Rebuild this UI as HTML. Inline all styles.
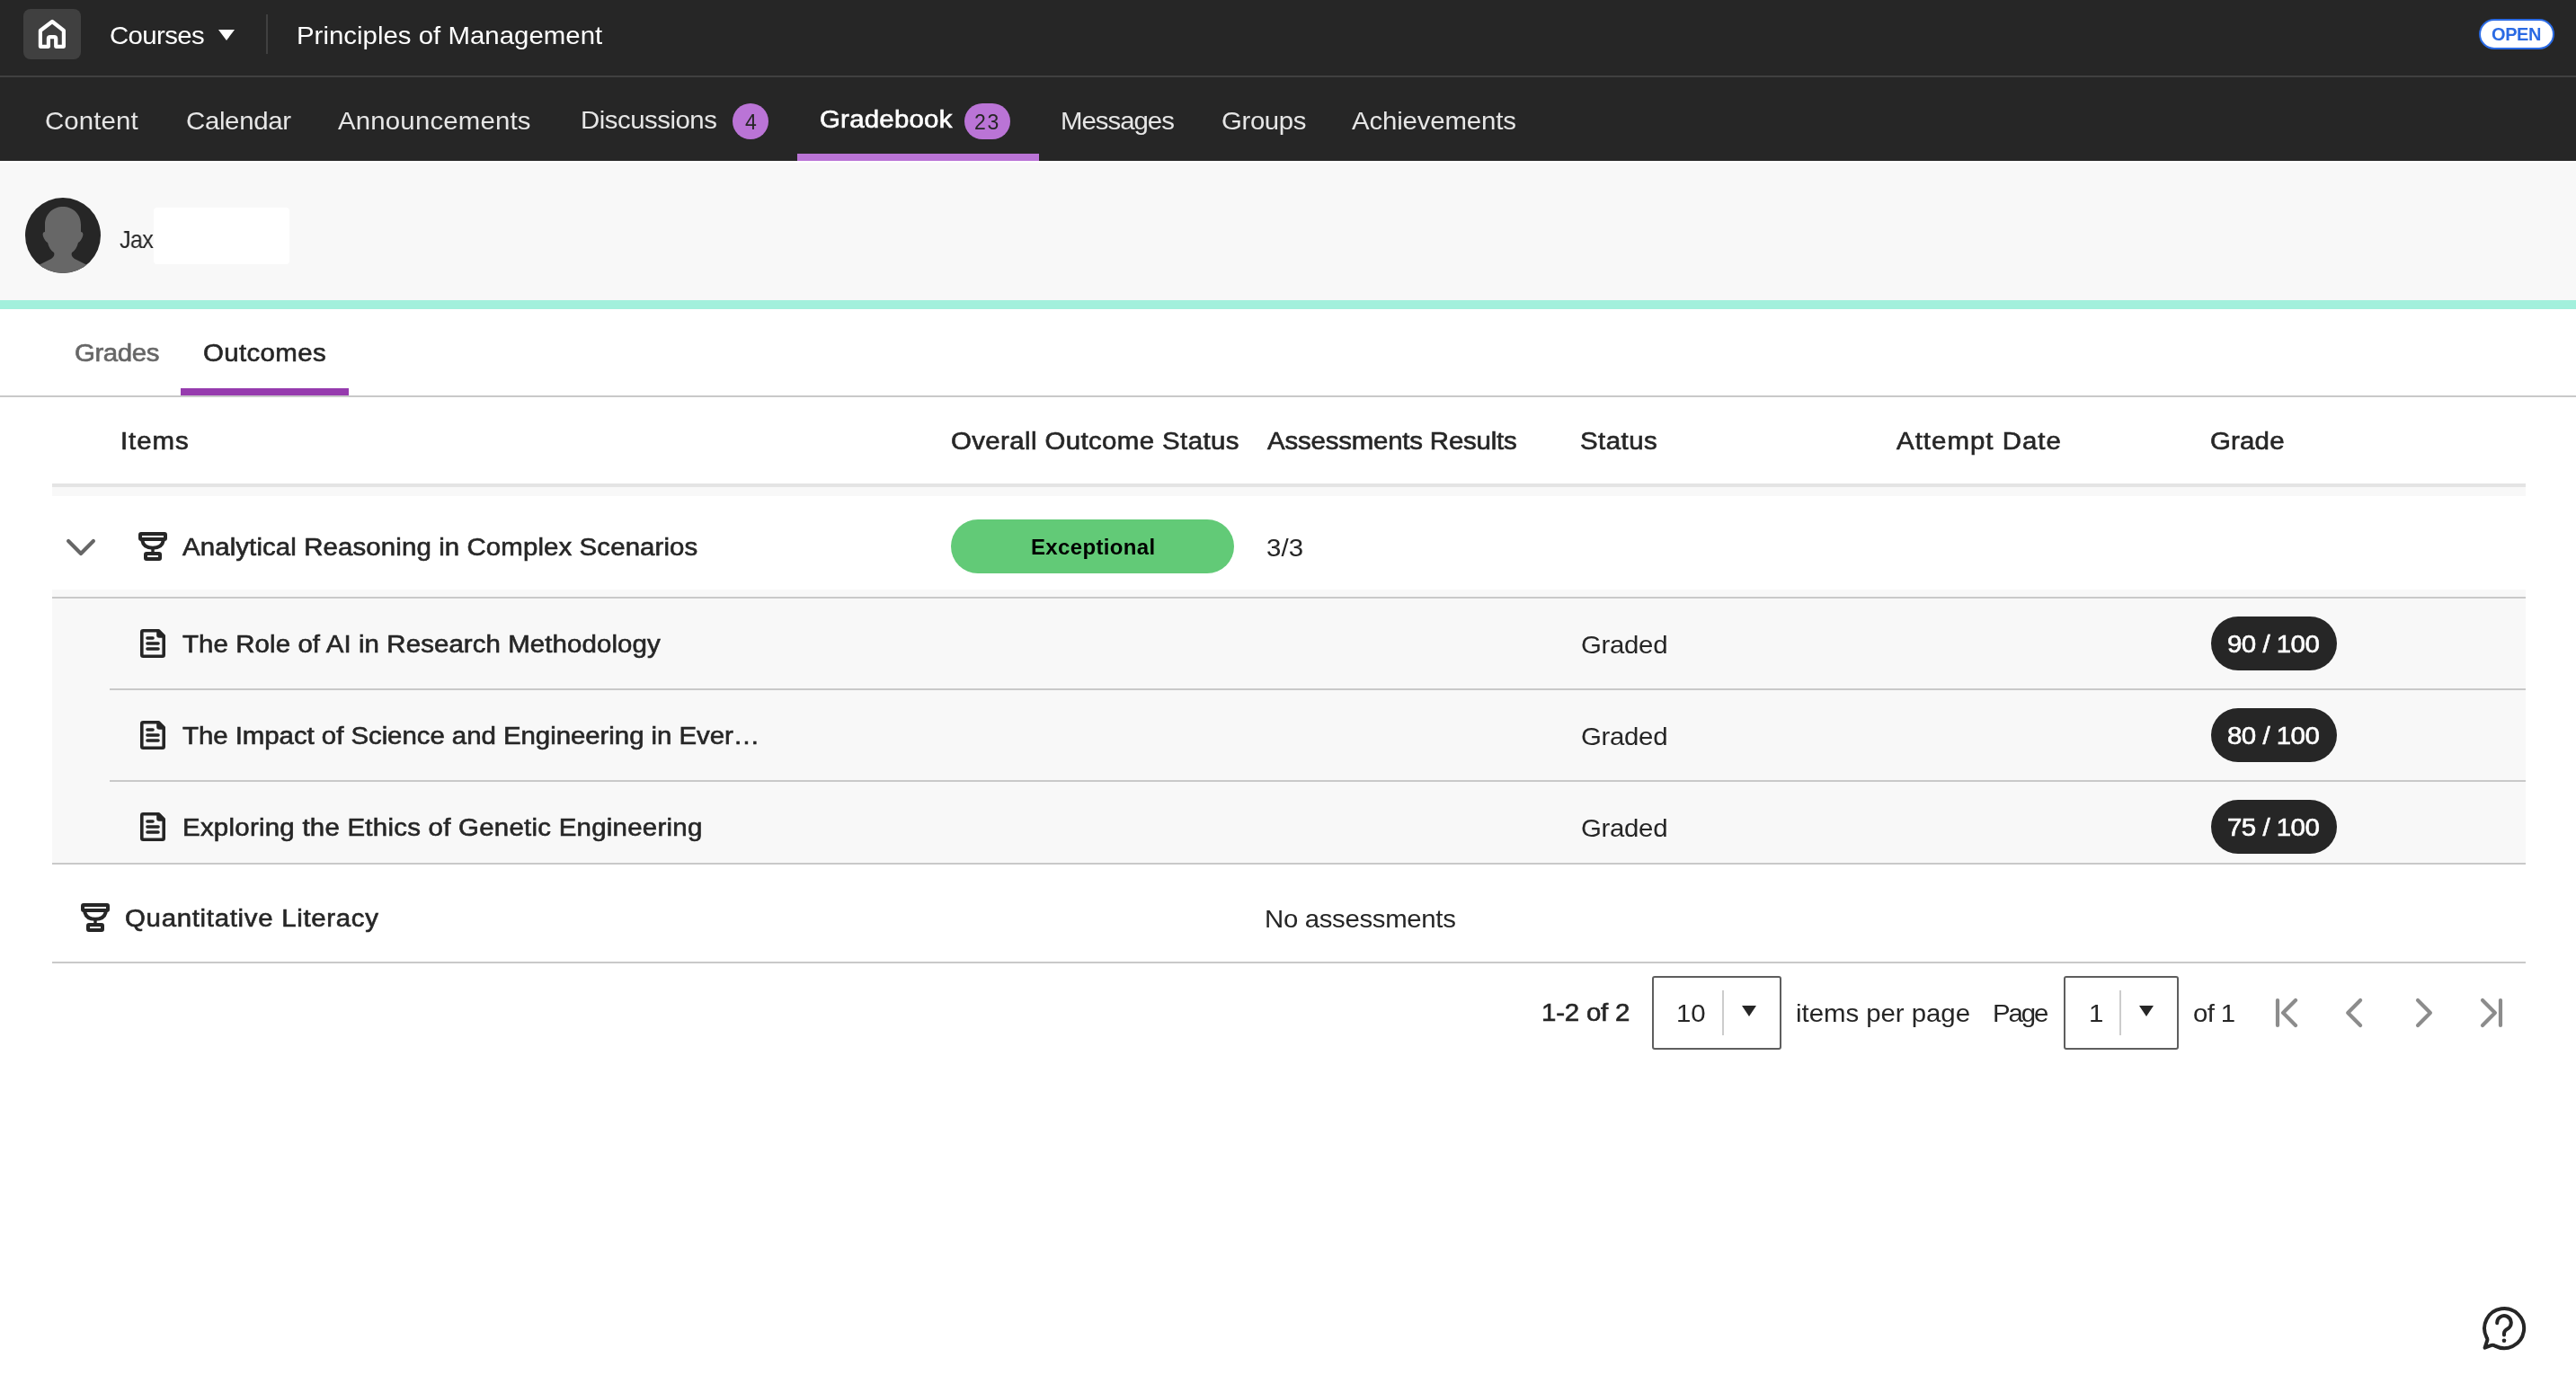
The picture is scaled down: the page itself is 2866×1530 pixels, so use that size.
<!DOCTYPE html>
<html lang="en"><head><meta charset="utf-8"><title>Gradebook - Principles of Management</title>
<style>
html,body{margin:0;padding:0;}
body{width:2866px;height:1530px;position:relative;overflow:hidden;background:#fff;font-family:"Liberation Sans",sans-serif;}
div,span,svg{position:absolute;box-sizing:border-box;}
header,nav,main,section,footer{display:block;position:static;margin:0;padding:0;height:0;}
.t{white-space:nowrap;font-weight:400;will-change:transform;transform-origin:0 0;}
.b{font-weight:700;}
.sb{-webkit-text-stroke:0.6px currentColor;}
.ic{overflow:visible;}
#top{left:0;top:0;width:2866px;height:179px;background:#262626;}
#topline{left:0;top:84px;width:2866px;height:2px;background:#404040;}
#home{left:26px;top:10px;width:64px;height:56px;border-radius:8px;background:#404040;}
#caret{left:243px;top:33px;width:0;height:0;border-left:9px solid transparent;border-right:9px solid transparent;border-top:12px solid #fff;}
#vdiv{left:296px;top:16px;width:2px;height:44px;background:#404040;}
#open{left:2758px;top:21px;width:84px;height:34px;border:2px solid #2a6ae3;border-radius:17px;background:#fff;}
.badge{background:#ba74d6;border-radius:20px;height:40px;top:115px;}
#nav-ul{left:887px;top:171px;width:269px;height:8px;background:#ba74d6;}
#hdr{left:0;top:179px;width:2866px;height:155px;background:#f8f8f8;border-top:2px solid #fff;}
#avatar{left:28px;top:220px;width:84px;height:84px;border-radius:50%;background:#262626;overflow:hidden;}
#redact{left:171px;top:231px;width:151px;height:63px;border-radius:4px;background:#fff;}
#teal{left:0;top:334px;width:2866px;height:10px;background:#a2f0dc;}
#tab-ul{left:201px;top:432px;width:187px;height:8px;background:#963bae;}
#tab-line{left:0;top:440px;width:2866px;height:2px;background:#c9c9c9;}
#th-line{left:58px;top:538px;width:2752px;height:4px;background:#e4e4e4;}
#th-gap{left:58px;top:542px;width:2752px;height:10px;background:#f8f8f8;}
#exc{left:1058px;top:578px;width:315px;height:60px;border-radius:30px;background:#62ca77;}
#kids{left:58px;top:656px;width:2752px;height:304px;background:#f8f8f8;}
.ln{height:2px;background:#c9c9c9;}
.gp{left:2460px;width:140px;height:60px;border-radius:30px;background:#262626;}
.sel{top:1086px;height:82px;border:2px solid #5e5e5e;border-radius:3px;background:#fff;}
.sdiv{top:1102px;width:2px;height:50px;background:#cccccc;}
.sarr{top:1119px;width:0;height:0;border-left:8px solid transparent;border-right:8px solid transparent;border-top:12px solid #262626;}
</style></head><body>
<div id="top"></div><div id="topline"></div>
<header aria-label="Global navigation">
<div id="home"><svg style="left:0;top:0" width="64" height="56" viewBox="26 10 64 56" fill="none" stroke="#fff" stroke-width="4.200" stroke-linejoin="round"><path d="M53.900 51.800H44.900V34L58.100 24L70.900 34V51.800H62.200V43.100Q62.200 41.100 60.200 41.100H55.900Q53.900 41.100 53.900 43.100Z"/></svg></div>
<span id="t_courses" class="t" style="left:122.05px;top:26px;font-size:28px;line-height:28px;color:#ffffff;letter-spacing:-0.615px;transform:scaleX(1.05);">Courses</span><div id="caret"></div><div id="vdiv"></div><span id="t_title" class="t" style="left:329.50px;top:26px;font-size:28px;line-height:28px;color:#ffffff;letter-spacing:0.011px;transform:scaleX(1.05);">Principles of Management</span>
<div id="open"></div><span id="t_open" class="t b" style="left:2771.84px;top:28px;font-size:20px;line-height:20px;color:#2a6ae3;letter-spacing:-0.392px;">OPEN</span>
</header>
<nav aria-label="Course navigation">
<span id="n_content" class="t" style="left:50.15px;top:121px;font-size:28px;line-height:28px;color:#e6e6e6;letter-spacing:0.103px;transform:scaleX(1.05);">Content</span><span id="n_calendar" class="t" style="left:206.55px;top:121px;font-size:28px;line-height:28px;color:#e6e6e6;letter-spacing:-0.315px;transform:scaleX(1.05);">Calendar</span><span id="n_ann" class="t" style="left:375.90px;top:121px;font-size:28px;line-height:28px;color:#e6e6e6;letter-spacing:0.165px;transform:scaleX(1.05);">Announcements</span><span id="n_disc" class="t" style="left:646.10px;top:120px;font-size:28px;line-height:28px;color:#e6e6e6;letter-spacing:-0.472px;transform:scaleX(1.05);">Discussions</span>
<div class="badge" style="left:815px;width:40px"></div><span id="b_4" class="t" style="left:828.70px;top:125px;font-size:23px;line-height:23px;color:#262626;letter-spacing:0.000px;">4</span>
<span id="n_grade" class="t sb" style="left:911.84px;top:120px;font-size:27px;line-height:27px;color:#ffffff;letter-spacing:0.204px;transform:scaleX(1.09);">Gradebook</span><div class="badge" style="left:1073px;width:51px"></div><span id="b_23" class="t" style="left:1084.20px;top:125px;font-size:23px;line-height:23px;color:#262626;letter-spacing:1.808px;">23</span>
<div id="nav-ul"></div>
<span id="n_msg" class="t" style="left:1179.90px;top:121px;font-size:28px;line-height:28px;color:#e6e6e6;letter-spacing:-0.967px;transform:scaleX(1.05);">Messages</span><span id="n_groups" class="t" style="left:1359.05px;top:121px;font-size:28px;line-height:28px;color:#e6e6e6;letter-spacing:-0.368px;transform:scaleX(1.05);">Groups</span><span id="n_ach" class="t" style="left:1504.20px;top:121px;font-size:28px;line-height:28px;color:#e6e6e6;letter-spacing:-0.156px;transform:scaleX(1.05);">Achievements</span>
</nav>
<div id="hdr"></div>
<section aria-label="Student">
<div id="avatar"><svg style="left:0;top:0" width="84" height="84" viewBox="0 0 84 84"><path fill="#676767" d="M42 10c-11 0-20 8-20 20v8c-2 0-3 2-2 5s3 6 5 7c1 5 4 9 7 11 1 3 0 5-3 7l-16 8c6 5 16 9 29 9s23-4 29-9l-16-8c-3-2-4-4-3-7 3-2 6-6 7-11 2-1 4-4 5-7s0-5-2-5v-8c0-12-9-20-20-20z"/></svg></div>
<span id="h_jax" class="t" style="left:132.70px;top:253px;font-size:28px;line-height:28px;color:#262626;letter-spacing:-0.731px;transform:scaleX(0.9);">Jax</span><div id="redact"></div>
</section>
<div id="teal"></div>
<main>
<section role="tablist" aria-label="Gradebook views">
<span id="tab_grades" class="t sb" style="left:82.64px;top:380px;font-size:27px;line-height:27px;color:#666666;letter-spacing:-0.383px;transform:scaleX(1.09);">Grades</span><span id="tab_out" class="t sb" style="left:226.04px;top:380px;font-size:27px;line-height:27px;color:#262626;letter-spacing:0.336px;transform:scaleX(1.09);">Outcomes</span><div id="tab-ul"></div><div id="tab-line"></div>
</section>
<section role="table" aria-label="Outcomes">
<span id="th_items" class="t sb" style="left:133.55px;top:478px;font-size:27px;line-height:27px;color:#262626;letter-spacing:0.853px;transform:scaleX(1.09);">Items</span><span id="th_overall" class="t sb" style="left:1057.80px;top:478px;font-size:27px;line-height:27px;color:#262626;letter-spacing:0.350px;transform:scaleX(1.09);">Overall Outcome Status</span><span id="th_assess" class="t sb" style="left:1409.73px;top:478px;font-size:27px;line-height:27px;color:#262626;letter-spacing:-0.179px;transform:scaleX(1.09);">Assessments Results</span><span id="th_status" class="t sb" style="left:1757.80px;top:478px;font-size:27px;line-height:27px;color:#262626;letter-spacing:0.431px;transform:scaleX(1.09);">Status</span><span id="th_attempt" class="t sb" style="left:2109.63px;top:478px;font-size:27px;line-height:27px;color:#262626;letter-spacing:0.926px;transform:scaleX(1.09);">Attempt Date</span><span id="th_grade" class="t sb" style="left:2459.04px;top:478px;font-size:27px;line-height:27px;color:#262626;letter-spacing:0.172px;transform:scaleX(1.09);">Grade</span>
<div id="th-line"></div><div id="th-gap"></div>
<svg class="ic" style="left:72px;top:596px" width="36" height="26" viewBox="72 596 36 26" fill="none" stroke="#666" stroke-width="4.200" stroke-linecap="round" stroke-linejoin="round"><path d="M76.100 602L90 616L103.900 602"/></svg>
<svg class="ic" style="left:154px;top:592px" width="32" height="32" viewBox="0 0 32 32" fill="none" stroke="#262626" stroke-width="4" stroke-linejoin="round" stroke-linecap="round"><rect x="2" y="2" width="28" height="6" rx="1"/><path d="M4.300 9.500C5.200 15.200 10 17.700 16 17.700S26.800 15.200 27.700 9.500"/><path d="M16 19V23" stroke-width="3.400" stroke-linecap="butt"/><rect x="8" y="24" width="16" height="6" rx="1"/></svg>
<span id="r1_title" class="t sb" style="left:202.53px;top:596px;font-size:27px;line-height:27px;color:#262626;letter-spacing:0.092px;transform:scaleX(1.09);">Analytical Reasoning in Complex Scenarios</span><div id="exc"></div><span id="r1_exc" class="t b" style="left:1147.10px;top:597px;font-size:24px;line-height:24px;color:#000000;letter-spacing:0.336px;">Exceptional</span><span id="r1_33" class="t" style="left:1408.55px;top:596px;font-size:28px;line-height:28px;color:#262626;letter-spacing:0.134px;transform:scaleX(1.05);">3/3</span>
<div id="kids"></div>
<div class="ln" style="left:58px;top:664px;width:2752px"></div>
<div class="ln" style="left:122px;top:766px;width:2688px"></div>
<div class="ln" style="left:122px;top:868px;width:2688px"></div>
<div class="ln" style="left:58px;top:960px;width:2752px"></div>
<svg class="ic" style="left:156px;top:700px" width="28" height="32" viewBox="0 0 28 32" fill="none" stroke="#262626" stroke-width="3.6" stroke-linejoin="round" stroke-linecap="round"><path d="M1.8 3.300Q1.8 1.8 3.300 1.8H20.500L26.200 7.500V28.700Q26.200 30.200 24.700 30.200H3.300Q1.8 30.200 1.8 28.700Z"/><path d="M19 1.8H20.500L26.200 7.500V9H21Q19 9 19 7Z" fill="#262626" stroke-width="1.600"/><path d="M8 10H14M8 16H20M8 22H20"/></svg><span id="c1_title" class="t sb" style="left:202.73px;top:704px;font-size:27px;line-height:27px;color:#262626;letter-spacing:0.081px;transform:scaleX(1.09);">The Role of AI in Research Methodology</span><span id="c1_graded" class="t" style="left:1758.85px;top:704px;font-size:28px;line-height:28px;color:#262626;letter-spacing:-0.297px;transform:scaleX(1.05);">Graded</span><div class="gp" style="top:686px"></div><span id="c1_g" class="t sb" style="left:2478.04px;top:704px;font-size:27px;line-height:27px;color:#ffffff;letter-spacing:-0.462px;transform:scaleX(1.09);">90 / 100</span>
<svg class="ic" style="left:156px;top:802px" width="28" height="32" viewBox="0 0 28 32" fill="none" stroke="#262626" stroke-width="3.6" stroke-linejoin="round" stroke-linecap="round"><path d="M1.8 3.300Q1.8 1.8 3.300 1.8H20.500L26.200 7.500V28.700Q26.200 30.200 24.700 30.200H3.300Q1.8 30.200 1.8 28.700Z"/><path d="M19 1.8H20.500L26.200 7.500V9H21Q19 9 19 7Z" fill="#262626" stroke-width="1.600"/><path d="M8 10H14M8 16H20M8 22H20"/></svg><span id="c2_title" class="t sb" style="left:202.73px;top:806px;font-size:27px;line-height:27px;color:#262626;letter-spacing:-0.047px;transform:scaleX(1.09);">The Impact of Science and Engineering in Ever…</span><span id="c2_graded" class="t" style="left:1758.85px;top:806px;font-size:28px;line-height:28px;color:#262626;letter-spacing:-0.297px;transform:scaleX(1.05);">Graded</span><div class="gp" style="top:788px"></div><span id="c2_g" class="t sb" style="left:2478.04px;top:806px;font-size:27px;line-height:27px;color:#ffffff;letter-spacing:-0.462px;transform:scaleX(1.09);">80 / 100</span>
<svg class="ic" style="left:156px;top:904px" width="28" height="32" viewBox="0 0 28 32" fill="none" stroke="#262626" stroke-width="3.6" stroke-linejoin="round" stroke-linecap="round"><path d="M1.8 3.300Q1.8 1.8 3.300 1.8H20.500L26.200 7.500V28.700Q26.200 30.200 24.700 30.200H3.300Q1.8 30.200 1.8 28.700Z"/><path d="M19 1.8H20.500L26.200 7.500V9H21Q19 9 19 7Z" fill="#262626" stroke-width="1.600"/><path d="M8 10H14M8 16H20M8 22H20"/></svg><span id="c3_title" class="t sb" style="left:202.85px;top:908px;font-size:27px;line-height:27px;color:#262626;letter-spacing:0.231px;transform:scaleX(1.09);">Exploring the Ethics of Genetic Engineering</span><span id="c3_graded" class="t" style="left:1758.85px;top:908px;font-size:28px;line-height:28px;color:#262626;letter-spacing:-0.297px;transform:scaleX(1.05);">Graded</span><div class="gp" style="top:890px"></div><span id="c3_g" class="t sb" style="left:2478.04px;top:908px;font-size:27px;line-height:27px;color:#ffffff;letter-spacing:-0.462px;transform:scaleX(1.09);">75 / 100</span>
<svg class="ic" style="left:90px;top:1005px" width="32" height="32" viewBox="0 0 32 32" fill="none" stroke="#262626" stroke-width="4" stroke-linejoin="round" stroke-linecap="round"><rect x="2" y="2" width="28" height="6" rx="1"/><path d="M4.300 9.500C5.200 15.200 10 17.700 16 17.700S26.800 15.200 27.700 9.500"/><path d="M16 19V23" stroke-width="3.400" stroke-linecap="butt"/><rect x="8" y="24" width="16" height="6" rx="1"/></svg><span id="r2_title" class="t sb" style="left:138.74px;top:1009px;font-size:27px;line-height:27px;color:#262626;letter-spacing:0.629px;transform:scaleX(1.09);">Quantitative Literacy</span><span id="r2_no" class="t" style="left:1407.30px;top:1009px;font-size:28px;line-height:28px;color:#262626;letter-spacing:-0.324px;transform:scaleX(1.05);">No assessments</span>
<div class="ln" style="left:58px;top:1070px;width:2752px"></div>
</section>
<footer aria-label="Pagination">
<span id="p_range" class="t sb" style="left:1715.03px;top:1114px;font-size:27px;line-height:27px;color:#262626;letter-spacing:-0.179px;transform:scaleX(1.09);">1-2 of 2</span>
<div class="sel" style="left:1838px;width:144px"></div><span id="p_10" class="t" style="left:1865.40px;top:1114px;font-size:28px;line-height:28px;color:#262626;letter-spacing:-0.001px;transform:scaleX(1.05);">10</span><div class="sdiv" style="left:1916px"></div><div class="sarr" style="left:1938px"></div>
<span id="p_ipp" class="t" style="left:1997.97px;top:1114px;font-size:28px;line-height:28px;color:#262626;letter-spacing:-0.035px;transform:scaleX(1.05);">items per page</span><span id="p_page" class="t" style="left:2217.10px;top:1114px;font-size:28px;line-height:28px;color:#262626;letter-spacing:-2.019px;transform:scaleX(1.05);">Page</span>
<div class="sel" style="left:2296px;width:128px"></div><span id="p_1" class="t" style="left:2323.90px;top:1114px;font-size:28px;line-height:28px;color:#262626;letter-spacing:0.000px;transform:scaleX(1.05);">1</span><div class="sdiv" style="left:2358px"></div><div class="sarr" style="left:2380px"></div>
<span id="p_of1" class="t" style="left:2440.45px;top:1114px;font-size:28px;line-height:28px;color:#262626;letter-spacing:-0.618px;transform:scaleX(1.05);">of 1</span>
<svg class="ic" style="left:2520px;top:1100px" width="280" height="56" viewBox="2520 1100 280 56" fill="none" stroke="#8c8c8c" stroke-width="4.200" stroke-linecap="round" stroke-linejoin="round"><path d="M2534 1113V1140.900M2554 1113L2540.100 1126.950L2554 1140.900"/><path d="M2626.100 1113L2612.200 1126.950L2626.100 1140.900"/><path d="M2690 1113L2703.900 1126.950L2690 1140.900"/><path d="M2762 1113L2775.900 1126.950L2762 1140.900M2782 1113V1140.900"/></svg>
</footer>
</main>
<svg class="ic" style="left:2762px;top:1454px" width="48" height="48" viewBox="0 0 48 48" fill="none" stroke="#262626" stroke-width="4" stroke-linecap="round" stroke-linejoin="round"><path d="M4.500 34A22 22 0 1 1 14 43.600Q12 42.300 10 42.900L2.600 45.700L5.300 37.400Q5.700 35.600 4.500 34Z"/><path d="M16.200 18.200A7.800 7.800 0 1 1 28.400 24.300Q24 26.500 24 29.500V31.400"/><circle cx="24" cy="37.800" r="2.300" fill="#262626" stroke="none"/></svg>
</body></html>
